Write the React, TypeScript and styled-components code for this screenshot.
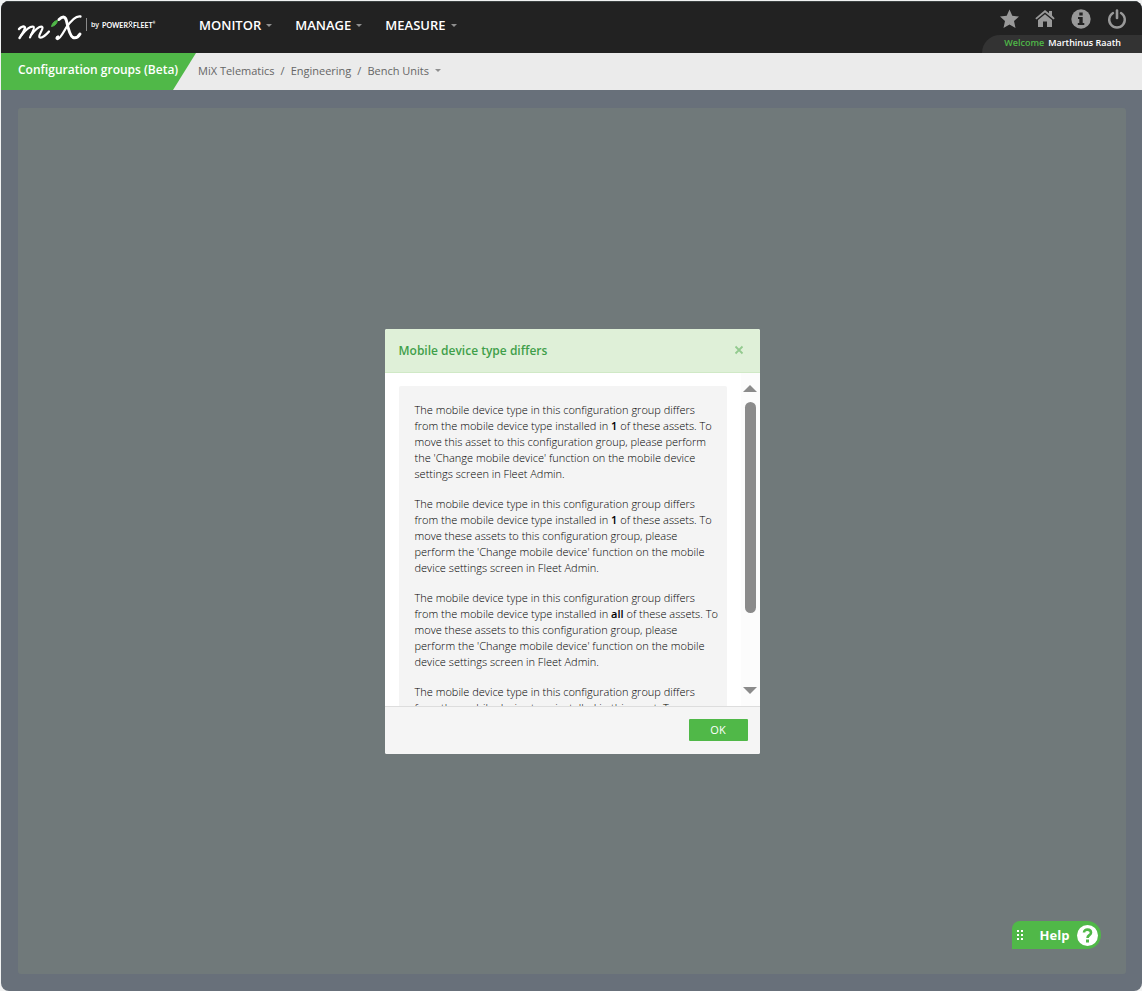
import React from "react";
import styled, { createGlobalStyle } from "styled-components";

const Global = createGlobalStyle`
  *, *::before, *::after { box-sizing: border-box; }
  html, body, #root { height: 100%; }
  body { margin: 0; background: #f1f2f2; font-family: "Open Sans", "Noto Sans", sans-serif; font-size: 11px; }
  button { font-family: inherit; border: 0; cursor: pointer; }
  a { text-decoration: none; }
`;

const Frame = styled.div`
  min-height: 100%;
  padding: 1px 0 0 1px;
  display: flex;
`;

const Shell = styled.div`
  position: relative;
  flex: 1;
  display: flex;
  flex-direction: column;
  border-radius: 8px;
  overflow: hidden;
  background: #68707a;
`;

const TopBar = styled.header`
  display: flex;
  height: 52px;
  background: #222222;
  border-top: 1px solid #3d4343;
`;

const Brand = styled.a`
  display: flex;
  width: 181px;
  padding: 10px 0 0 16px;
  color: #ffffff;
`;

const BrandBy = styled.span`
  display: flex;
  align-items: center;
  gap: 3px;
  height: 13px;
  margin: 6px 0 0 3px;
  padding-left: 4px;
  border-left: 1px solid #8a8a8a;
  font-size: 7px;
  font-weight: 600;
  line-height: 12px;
  white-space: nowrap;
`;

const BrandName = styled.span`
  display: flex;
  align-items: center;
  font-family: Lato, sans-serif;
  font-size: 7px;
  font-weight: 700;
`;

const Reg = styled.sup`
  font-size: 3px;
  line-height: 3px;
  align-self: flex-start;
  margin-top: 3px;
`;

const MainNav = styled.nav`
  display: flex;
  align-items: center;
  gap: 23px;
  height: 46px;
  padding-left: 17px;
`;

const NavButton = styled.button`
  display: flex;
  align-items: center;
  gap: 5px;
  padding: 0;
  background: none;
  color: #ffffff;
  font-size: 13px;
  font-weight: 600;
  line-height: 18px;
`;

const Caret = styled.i`
  border: 3px solid transparent;
  border-top-color: #8f8f8f;
  border-bottom: 0;
`;

const Account = styled.div`
  display: flex;
  flex-direction: column;
  justify-content: space-between;
  margin-left: auto;
`;

const IconRow = styled.div`
  display: flex;
  justify-content: flex-end;
  gap: 16px;
  padding: 7px 15px 0 0;
`;

const IconButton = styled.button`
  display: flex;
  width: 20px;
  height: 20px;
  padding: 0;
  background: none;
  color: #999999;
`;

const Welcome = styled.div`
  display: flex;
  gap: 4px;
  height: 18px;
  padding: 0 21px 0 22px;
  border-top-left-radius: 18px;
  background: #333333;
  color: #ffffff;
  font-size: 9px;
  font-weight: 600;
  line-height: 15px;
`;

const WelcomeLabel = styled.span`
  color: #4fb848;
`;

const SubBar = styled.div`
  display: flex;
  height: 37px;
  background: #ebebeb;
`;

const PageTitle = styled.h1`
  width: 196px;
  margin: 0;
  padding: 8px 0 0 17px;
  background: #50b848;
  clip-path: polygon(0 0, 195px 0, 172px 100%, 0 100%);
  color: #ffffff;
  font-size: 12px;
  font-weight: 600;
  line-height: 18px;
`;

const Crumbs = styled.nav`
  display: flex;
  align-items: center;
  gap: 6px;
  height: 35px;
  padding-left: 1px;
  color: #666666;
  font-size: 11px;
`;

const Crumb = styled.a`
  color: #666666;
`;

const Main = styled.main`
  flex: 1;
  display: flex;
  padding: 18px 16px 17px 17px;
`;

const Stage = styled.section`
  flex: 1;
  display: grid;
  place-items: center;
  border-radius: 3px;
  background: #70797a;
`;

const Dialog = styled.div`
  width: 375px;
  border-radius: 2px;
  overflow: hidden;
  background: #ffffff;
`;

const DialogHead = styled.div`
  display: flex;
  align-items: center;
  justify-content: space-between;
  height: 44px;
  padding: 0 16px 0 14px;
  border-bottom: 1px solid #d0e9c6;
  background: #dff0d8;
`;

const DialogTitle = styled.h2`
  margin: 0;
  color: #3f9f4a;
  font-size: 12px;
  font-weight: 600;
  line-height: 18px;
  padding-top: 2px;
`;

const CloseButton = styled.button`
  display: flex;
  padding: 0;
  background: none;
  color: #93ca8f;
`;

const DialogBody = styled.div`
  display: flex;
  justify-content: space-between;
  height: 333px;
  overflow: hidden;
`;

const Message = styled.div`
  width: 328px;
  height: 420px;
  margin: 13px 0 0 14px;
  padding: 16px 8px 0 16px;
  border-radius: 2px;
  background: #f4f4f4;
`;

const Paragraph = styled.p`
  margin: 0 0 14px;
  color: #000000;
  font-size: 11px;
  font-weight: 300;
  line-height: 16px;
`;

const Count = styled.b`
  font-weight: 600;
`;

const ScrollTrack = styled.div`
  display: flex;
  flex-direction: column;
  align-items: center;
  width: 19px;
  padding: 12px 0;
  background: #fcfcfc;
`;

const ScrollArrow = styled.i<{ $down?: boolean }>`
  border: 7px solid transparent;
  ${(p) =>
    p.$down
      ? "border-top-color: #8b8b8b; border-bottom: 0; margin-top: auto;"
      : "border-bottom-color: #8b8b8b; border-top: 0;"}
`;

const ScrollThumb = styled.div`
  width: 11px;
  height: 211px;
  margin-top: 10px;
  border-radius: 6px;
  background: #8b8b8b;
`;

const DialogFoot = styled.div`
  display: flex;
  justify-content: flex-end;
  height: 48px;
  padding: 12px 12px 0;
  border-top: 1px solid #dddddd;
  background: #f5f5f5;
`;

const OkButton = styled.button`
  width: 59px;
  height: 22px;
  padding: 0;
  border-radius: 1px;
  background: #50b848;
  color: #ffffff;
  font-size: 11px;
  line-height: 22px;
`;

const HelpButton = styled.button`
  position: absolute;
  right: 41px;
  bottom: 42px;
  display: flex;
  align-items: center;
  width: 89px;
  height: 28px;
  padding: 0 3px 0 5px;
  border-radius: 8px 14px 14px 0;
  background: #50b848;
  color: #ffffff;
  font-size: 13px;
  font-weight: 700;
`;

const HelpLabel = styled.span`
  margin: 0 auto;
  padding-left: 8px;
`;

const MixLogo = () => (
  <svg width="66" height="30" viewBox="0 0 66 30" fill="none" stroke="#fff" strokeLinecap="round" strokeLinejoin="round">
    <path d="M2 17C4 14.500 7.500 13.500 8 15.500C8 18 4.500 23 2.500 26" strokeWidth="2.400" />
    <path d="M4.500 23C9 17.500 14 14 16.500 14.800C18.500 16 14 22 13 25.500" strokeWidth="2.200" />
    <path d="M14 23C18 18 22.500 14 25 14.800C27.500 16 20.500 23.500 22.500 25.300C24.500 26.500 29 23 32 19.500" strokeWidth="2.200" />
    <path d="M40.500 8.500C38 8.500 35.500 10.500 34.500 14.500C37.500 14 40 12 40.500 8.500Z" fill="#50b848" stroke="#50b848" />
    <path d="M42 7.500C46 3.800 48.500 4.500 49.500 9C51 16 53 24 56 25.500C59 26.500 61.500 24.500 63 22" strokeWidth="3" />
    <path d="M63.500 4.500C58.500 3.500 53 10 49 16C46 21 43 27 40.500 27C39 27 39.500 25 41 24.500" strokeWidth="2.300" />
  </svg>
);

const StarIcon = () => (
  <svg width="20" height="20" viewBox="0 0 20 20" fill="currentColor">
    <path d="M10.500 .5L13.300 6.800L20 7.500L15 12L16.500 19L10.500 15.500L4.500 19L6 12L1 7.500L7.700 6.800Z" />
  </svg>
);

const HomeIcon = () => (
  <svg width="20" height="20" viewBox="0 0 20 20" fill="currentColor">
    <path d="M14 2H17V6.500L19.700 9.200L18.500 10.500L10 3.500L1.500 10.500L.3 9.200L10 1L14 4.300Z" />
    <path d="M10 5.200L17 11V18H12V12.500H8V18H3V11Z" />
  </svg>
);

const InfoIcon = () => (
  <svg width="20" height="20" viewBox="0 0 20 20">
    <circle cx="10" cy="10" r="9.700" fill="currentColor" />
    <path d="M8.300 3.500H11.700V6.500H8.300ZM7 8H11.700V14H13.300V16H6.800V14H8.300V10H7Z" fill="#222" />
  </svg>
);

const PowerIcon = () => (
  <svg width="20" height="20" viewBox="0 0 20 20" fill="none" stroke="currentColor" strokeLinecap="round">
    <path d="M6 4A7.800 7.800 0 1 0 14 4" strokeWidth="2.400" />
    <path d="M10 1.500V9" strokeWidth="2.600" />
  </svg>
);

const navItems = ["MONITOR", "MANAGE", "MEASURE"];

const messages = [
  { count: "1", tail: "of these assets. To move this asset to this configuration group, please perform the 'Change mobile device' function on the mobile device settings screen in Fleet Admin." },
  { count: "1", tail: "of these assets. To move these assets to this configuration group, please perform the 'Change mobile device' function on the mobile device settings screen in Fleet Admin." },
  { count: "all", tail: "of these assets. To move these assets to this configuration group, please perform the 'Change mobile device' function on the mobile device settings screen in Fleet Admin." },
];

export default function App() {
  return (
    <Frame>
      <Global />
      <Shell>
        <TopBar>
          <Brand href="#" aria-label="MiX by Powerfleet">
            <MixLogo />
            <BrandBy>
              by
              <BrandName>
                POWER
                <svg width="5" height="7" viewBox="0 0 5 7" fill="none" stroke="#fff">
                  <circle cx="2.500" cy="2" r="1.500" />
                  <path d="M.5 6.500L2.500 4L4.500 6.500" />
                </svg>
                FLEET<Reg>®</Reg>
              </BrandName>
            </BrandBy>
          </Brand>
          <MainNav>
            {navItems.map((item) => (
              <NavButton key={item}>
                {item}
                <Caret />
              </NavButton>
            ))}
          </MainNav>
          <Account>
            <IconRow>
              <IconButton aria-label="Favourites"><StarIcon /></IconButton>
              <IconButton aria-label="Home"><HomeIcon /></IconButton>
              <IconButton aria-label="Information"><InfoIcon /></IconButton>
              <IconButton aria-label="Log out"><PowerIcon /></IconButton>
            </IconRow>
            <Welcome>
              <WelcomeLabel>Welcome</WelcomeLabel>
              <span>Marthinus Raath</span>
            </Welcome>
          </Account>
        </TopBar>
        <SubBar>
          <PageTitle>Configuration groups (Beta)</PageTitle>
          <Crumbs aria-label="Breadcrumb">
            <Crumb href="#">MiX Telematics</Crumb>
            <span>/</span>
            <Crumb href="#">Engineering</Crumb>
            <span>/</span>
            <Crumb href="#">Bench Units</Crumb>
            <Caret />
          </Crumbs>
        </SubBar>
        <Main>
          <Stage>
            <Dialog role="dialog" aria-labelledby="dialog-title">
              <DialogHead>
                <DialogTitle id="dialog-title">Mobile device type differs</DialogTitle>
                <CloseButton aria-label="Close">
                  <svg width="10" height="10" viewBox="0 0 10 10" stroke="currentColor" strokeWidth="1.800">
                    <path d="M1.500 1.500L8.500 8.500M8.500 1.500L1.500 8.500" />
                  </svg>
                </CloseButton>
              </DialogHead>
              <DialogBody>
                <Message>
                  {messages.map((m, i) => (
                    <Paragraph key={i}>
                      The mobile device type in this configuration group differs from the mobile device type installed in <Count>{m.count}</Count> {m.tail}
                    </Paragraph>
                  ))}
                  <Paragraph>
                    The mobile device type in this configuration group differs from the mobile device type installed in this asset. To
                  </Paragraph>
                </Message>
                <ScrollTrack aria-hidden="true">
                  <ScrollArrow />
                  <ScrollThumb />
                  <ScrollArrow $down />
                </ScrollTrack>
              </DialogBody>
              <DialogFoot>
                <OkButton>OK</OkButton>
              </DialogFoot>
            </Dialog>
          </Stage>
        </Main>
        <HelpButton>
          <svg width="7" height="11" viewBox="0 0 7 11" fill="#fff">
            <path d="M0 0h2v2h-2zM4 0h2v2h-2zM0 4h2v2h-2zM4 4h2v2h-2zM0 8h2v2h-2zM4 8h2v2h-2z" />
          </svg>
          <HelpLabel>Help</HelpLabel>
          <svg width="21" height="21" viewBox="0 0 21 21" fill="none">
            <circle cx="10.500" cy="10.500" r="10.500" fill="#fff" />
            <path d="M7 7.500C7 3.500 14 3.700 14 7.700C14 10.300 10.500 10 10.500 13" stroke="#50b848" strokeWidth="2.600" />
            <rect x="9" y="14.500" width="3" height="3" fill="#50b848" />
          </svg>
        </HelpButton>
      </Shell>
    </Frame>
  );
}
